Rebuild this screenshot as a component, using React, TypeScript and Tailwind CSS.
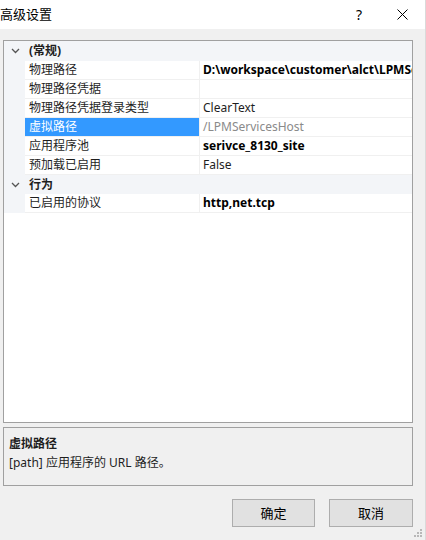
import React from "react";

const font = { fontFamily: '"Noto Sans", "Noto Sans CJK SC", sans-serif' };

function Chevron() {
  return (
    <svg width="9" height="6" viewBox="0 0 9 6" className="block">
      <path d="M1 1 L4.5 4.5 L8 1" fill="none" stroke="#555" strokeWidth="1.3" />
    </svg>
  );
}

type Row = { name: string; value: string; bold?: boolean; selected?: boolean; gray?: boolean };

function Category({ label, h }: { label: string; h: string }) {
  return (
    <div className={`flex items-center bg-[#f3f5f8] ${h}`}>
      <div className="w-[21px] flex justify-center pl-[1px]">
        <Chevron />
      </div>
      <div className="pl-[4px] font-bold text-[#1e1e1e]">{label}</div>
    </div>
  );
}

function PropRow({ r }: { r: Row }) {
  return (
    <div className="flex h-[19px]">
      <div className="w-[21px] bg-[#f3f5f8] shrink-0" />
      <div
        className={`w-[174px] shrink-0 flex items-center pl-[4px] border-b border-[#f0f0f0] ${
          r.selected ? "bg-[#3399ff] text-white" : "text-[#1e1e1e]"
        }`}
      >
        <span className="whitespace-nowrap">{r.name}</span>
      </div>
      <div className="w-px bg-[#f0f0f0] shrink-0" />
      <div
        className={`flex-1 min-w-0 overflow-hidden flex items-center pl-[3px] border-b border-[#f0f0f0] ${
          r.bold ? "font-bold text-black" : r.gray ? "text-[#8a8a8a]" : "text-[#1e1e1e]"
        }`}
      >
        <span className="whitespace-nowrap">{r.value}</span>
      </div>
    </div>
  );
}

export default function App() {
  const rows1: Row[] = [
    { name: "物理路径", value: "D:\\workspace\\customer\\alct\\LPMServicesHost", bold: true },
    { name: "物理路径凭据", value: "" },
    { name: "物理路径凭据登录类型", value: "ClearText" },
    { name: "虚拟路径", value: "/LPMServicesHost", selected: true, gray: true },
    { name: "应用程序池", value: "serivce_8130_site", bold: true },
    { name: "预加载已启用", value: "False" },
  ];
  const rows2: Row[] = [{ name: "已启用的协议", value: "http,net.tcp", bold: true }];

  return (
    <div
      className="w-[426px] h-[540px] bg-[#f0f0f0] text-[12px] leading-none relative overflow-hidden border-r border-[#dadada]"
      style={font}
    >
      {/* title bar */}
      <div className="h-[29px] bg-white flex items-center -mr-px border-r border-[#3b7fd6]">
        <div className="text-[13px] text-black">高级设置</div>
        <div className="flex-1" />
        <div className="text-[14px] text-black mr-[35px]">?</div>
        <div className="mr-[17px]">
          <svg width="11" height="11" viewBox="0 0 11 11" className="block">
            <path d="M0.5 0.5 L10.5 10.5 M10.5 0.5 L0.5 10.5" stroke="#000" strokeWidth="1" />
          </svg>
        </div>
      </div>

      <div className="px-[3px] pt-[11px] w-[416px]">
        {/* property grid */}
        <div className="h-[383px] border border-[#a0a0a0] bg-white overflow-hidden">
          <Category label="(常规)" h="h-[20px]" />
          {rows1.map((r) => (
            <PropRow key={r.name} r={r} />
          ))}
          <Category label="行为" h="h-[19px]" />
          {rows2.map((r) => (
            <PropRow key={r.name} r={r} />
          ))}
        </div>

        {/* description */}
        <div className="mt-[4px] h-[59px] border border-[#a0a0a0] bg-[#f0f0f0] pl-[5px] pt-[6px] text-[#1e1e1e]">
          <div className="font-bold h-[19px] flex items-center">虚拟路径</div>
          <div className="h-[19px] flex items-center">[path] 应用程序的 URL 路径。</div>
        </div>

        {/* buttons */}
        <div className="mt-[13px] flex justify-end gap-[14px]">
          <button className="w-[83px] h-[28px] bg-[#e1e1e1] border border-[#adadad] text-[13px] text-black flex items-center justify-center">
            确定
          </button>
          <button className="w-[84px] h-[28px] bg-[#e1e1e1] border border-[#adadad] text-[13px] text-black flex items-center justify-center">
            取消
          </button>
        </div>
      </div>

      {/* resize grip */}
      <svg width="10" height="10" viewBox="0 0 10 10" className="absolute right-[2px] bottom-[2px]">
        <rect x="7" y="1" width="2" height="2" fill="#b8b8b8" />
        <rect x="4" y="4" width="2" height="2" fill="#b8b8b8" />
        <rect x="7" y="4" width="2" height="2" fill="#b8b8b8" />
        <rect x="1" y="7" width="2" height="2" fill="#b8b8b8" />
        <rect x="4" y="7" width="2" height="2" fill="#b8b8b8" />
        <rect x="7" y="7" width="2" height="2" fill="#b8b8b8" />
      </svg>
    </div>
  );
}
